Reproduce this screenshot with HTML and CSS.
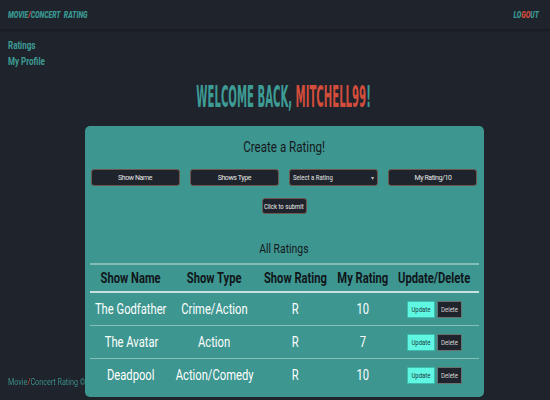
FILE: index.html
```html
<!DOCTYPE html>
<html>
<head>
<meta charset="utf-8">
<link rel="stylesheet" href="styles.css">
</head>
<body>
<header class="navbar">
  <a class="brand"><span class="sq sq-left">MOVIE<span class="red">/</span>CONCERT&nbsp; RATING</span></a>
  <a class="logout"><span class="sq sq-right">LO<span class="red">GO</span>UT</span></a>
</header>
<nav class="sidebar">
  <a class="side-link"><span class="sq sq-left">Ratings</span></a>
  <a class="side-link"><span class="sq sq-left">My Profile</span></a>
</nav>
<main class="main">
  <h1 class="welcome"><span class="welcome-text">WELCOME BACK, <span class="red">MITCHELL99</span>!</span></h1>
  <section class="card">
    <h2 class="card-title"><span class="sq">Create a Rating!</span></h2>
    <form class="form-row">
      <input class="field" type="text" placeholder="Show Name">
      <input class="field" type="text" placeholder="Shows Type">
      <div class="field select"><span class="sq sq-left">Select a Rating</span><span class="caret">▾</span></div>
      <input class="field" type="text" placeholder="My Rating/10">
    </form>
    <div class="submit-row"><button class="submit" type="button"><span class="sq">Click to submit</span></button></div>
    <h3 class="sub-title"><span class="sq">All Ratings</span></h3>
    <table class="ratings">
      <colgroup>
        <col style="width:83px"><col style="width:84px"><col style="width:78px"><col style="width:56px"><col style="width:88px">
      </colgroup>
      <thead>
        <tr><th><span class="sq">Show Name</span></th><th><span class="sq">Show Type</span></th><th><span class="sq">Show Rating</span></th><th><span class="sq">My Rating</span></th><th><span class="sq">Update/Delete</span></th></tr>
      </thead>
      <tbody>
        <tr><td><span class="sq">The Godfather</span></td><td><span class="sq">Crime/Action</span></td><td><span class="sq">R</span></td><td><span class="sq">10</span></td><td><div class="actions"><button class="btn-update"><span class="sq">Update</span></button><button class="btn-delete"><span class="sq">Delete</span></button></div></td></tr>
        <tr><td><span class="sq">The Avatar</span></td><td><span class="sq">Action</span></td><td><span class="sq">R</span></td><td><span class="sq">7</span></td><td><div class="actions"><button class="btn-update"><span class="sq">Update</span></button><button class="btn-delete"><span class="sq">Delete</span></button></div></td></tr>
        <tr class="last"><td><span class="sq">Deadpool</span></td><td><span class="sq">Action/Comedy</span></td><td><span class="sq">R</span></td><td><span class="sq">10</span></td><td><div class="actions"><button class="btn-update"><span class="sq">Update</span></button><button class="btn-delete"><span class="sq">Delete</span></button></div></td></tr>
      </tbody>
    </table>
  </section>
</main>
<footer class="footer"><span class="sq sq-left">Movie<span class="red">/</span>Concert Rating ©</span></footer>
</body>
</html>
```
FILE: styles.css
```css
html, body {
  margin: 0;
  padding: 0;
  background: #1f232b;
  font-family: Roboto, "Liberation Sans", sans-serif;
  height: 100%;
  overflow: hidden;
}
.red { color: #d34d3c; }
.sq {
  display: inline-block;
  transform: scaleX(0.8);
  transform-origin: center;
  white-space: nowrap;
}
.sq-left { transform-origin: left center; }
.sq-right { transform-origin: right center; }
.navbar {
  height: 30px;
  box-sizing: border-box;
  display: flex;
  justify-content: space-between;
  align-items: center;
  padding: 0 11px 0 8px;
  border-bottom: 1px solid #191c22;
  box-shadow: 0 1px 2px rgba(0,0,0,0.25);
}
.brand, .logout {
  color: #3a9a94;
  font-weight: 900;
  font-style: italic;
  font-size: 8.5px;
}
.sidebar {
  display: flex;
  flex-direction: column;
  padding: 8px 8px 0;
}
.side-link {
  color: #3d9c95;
  font-weight: bold;
  font-size: 10px;
  line-height: 16px;
}
.main {
  padding-left: 18px;
  display: flex;
  flex-direction: column;
  align-items: center;
}
.welcome {
  margin: 11px 0 0;
  height: 32px;
  font-family: "DejaVu Sans Condensed", sans-serif;
  font-size: 30px;
  line-height: 32px;
  font-weight: bold;
  color: #3d9c95;
  text-align: center;
  white-space: nowrap;
}
.welcome-text {
  display: inline-block;
  transform: scaleX(0.375);
  transform-origin: center;
}
.card {
  margin-top: 13px;
  width: 399px;
  height: 271px;
  box-sizing: border-box;
  background: #3d9690;
  border-radius: 5px;
  padding: 0 5px;
  display: flex;
  flex-direction: column;
}
.card-title {
  margin: 13px 0 0;
  text-align: center;
  font-size: 14.5px;
  line-height: 17px;
  font-weight: normal;
  color: #15191e;
}
.form-row {
  margin: 13px 0 0;
  display: flex;
  justify-content: space-between;
  padding: 0 1px;
}
.field {
  width: 89px;
  height: 17px;
  box-sizing: border-box;
  background: #1f232b;
  border: 1px solid #6e574c;
  border-radius: 3px;
  color: #e6e6e6;
  font-family: inherit;
  font-size: 7px;
  letter-spacing: -0.4px;
  text-align: center;
  padding: 0;
  outline: none;
}
.field::placeholder { color: #e6e6e6; }
.select {
  display: flex;
  align-items: center;
  justify-content: space-between;
  padding: 0 3px;
  font-size: 7.5px;
  text-align: left;
  letter-spacing: 0;
}
.caret { font-size: 6px; color: #bbb; }
.submit-row {
  display: flex;
  justify-content: center;
  margin-top: 12px;
}
.submit, .btn-update, .btn-delete {
  display: inline-flex;
  align-items: center;
  justify-content: center;
  padding: 0;
  font-family: inherit;
  white-space: nowrap;
  overflow: visible;
}
.submit {
  width: 45px;
  height: 16px;
  background: #1f232b;
  border: 1px solid #6e574c;
  border-radius: 3px;
  color: #f0f0f0;
  font-size: 7.5px;
}
.sub-title {
  margin: 27px 0 0;
  text-align: center;
  font-size: 13px;
  line-height: 15px;
  font-weight: normal;
  color: #15191e;
}
.ratings {
  margin-top: 7px;
  width: 389px;
  table-layout: fixed;
  border-collapse: collapse;
  border-top: 2px solid #83bdb8;
}
.ratings th .sq, .ratings td > .sq {
  margin: 0 -20px;
}
.ratings th {
  height: 26px;
  padding: 0;
  font-size: 14px;
  font-weight: bold;
  color: #10151a;
  text-align: center;
  border-bottom: 2px solid #c8e0de;
  white-space: nowrap;
}
.ratings td {
  height: 32px;
  padding: 0;
  font-size: 14px;
  color: #ffffff;
  text-align: center;
  border-bottom: 1px solid #86bfba;
  white-space: nowrap;
}
.ratings tr.last td { border-bottom: none; }
.actions {
  display: flex;
  justify-content: center;
  gap: 2px;
}
.btn-update, .btn-delete {
  height: 17px;
  font-size: 7.5px;
  border-radius: 1px;
}
.btn-update {
  width: 28px;
  background: #5ff6e2;
  border: 1px solid #3fbcae;
  color: #1d3a40;
}
.btn-delete {
  width: 25px;
  background: #1f232b;
  border: 1px solid #6a716f;
  color: #d8d8d8;
}
.footer {
  position: fixed;
  z-index: 2;
  left: 8px;
  bottom: 13px;
  font-size: 9px;
  color: #3a8e89;
}
```
